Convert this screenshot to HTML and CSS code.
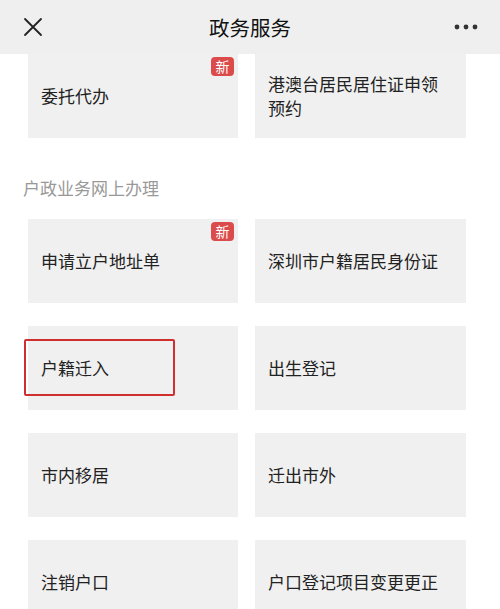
FILE: index.html
```html
<!DOCTYPE html>
<html lang="zh">
<head>
<meta charset="utf-8">
<link rel="stylesheet" href="styles.css">
</head>
<body>
<div class="page">
  <header class="topbar">
    <svg class="close" width="20" height="20" viewBox="0 0 20 20"><path d="M2 2 L18 18 M18 2 L2 18" stroke="#222" stroke-width="1.8" fill="none" stroke-linecap="round"/></svg>
    <div class="title">政务服务</div>
    <svg class="more" width="24" height="6" viewBox="0 0 24 6"><circle cx="3" cy="3" r="2.4" fill="#333"/><circle cx="12" cy="3" r="2.4" fill="#333"/><circle cx="21" cy="3" r="2.4" fill="#333"/></svg>
  </header>
  <div class="grid">
    <div class="card"><span class="txt">委托代办</span><span class="badge">新</span></div>
    <div class="card"><span class="txt">港澳台居民居住证申领<br>预约</span></div>
  </div>
  <div class="section">户政业务网上办理</div>
  <div class="grid">
    <div class="card"><span class="txt">申请立户地址单</span><span class="badge">新</span></div>
    <div class="card"><span class="txt">深圳市户籍居民身份证</span></div>
    <div class="card"><span class="txt">户籍迁入</span><span class="mark"></span></div>
    <div class="card"><span class="txt">出生登记</span></div>
    <div class="card"><span class="txt">市内移居</span></div>
    <div class="card"><span class="txt">迁出市外</span></div>
    <div class="card"><span class="txt">注销户口</span></div>
    <div class="card"><span class="txt">户口登记项目变更更正</span></div>
  </div>
</div>
</body>
</html>
```
FILE: styles.css
```css
html, body {
  margin: 0;
  padding: 0;
  background: #fff;
  overflow: hidden;
}
.page {
  width: 500px;
  height: 609px;
  overflow: hidden;
  font-family: "Noto Sans CJK SC", "Noto Sans", sans-serif;
  color: #222;
}
.topbar {
  height: 54px;
  background: #efefef;
  display: flex;
  align-items: center;
  justify-content: space-between;
  padding: 0 22px 0 23px;
  position: relative;
}
.close { display: block; }
.title {
  position: absolute;
  left: 0;
  right: 0;
  text-align: center;
  font-size: 20.5px;
  line-height: 54px;
  color: #111;
  pointer-events: none;
}
.more { display: block; }
.grid {
  display: grid;
  grid-template-columns: 210px 211px;
  column-gap: 17px;
  row-gap: 23px;
  padding-left: 28px;
}
.card {
  height: 84px;
  background: #f0f0f0;
  display: flex;
  align-items: center;
  padding-left: 13px;
  position: relative;
  box-sizing: border-box;
}
.txt {
  font-size: 17px;
  line-height: 24px;
  color: #222;
}
.badge {
  position: absolute;
  top: 3px;
  right: 4px;
  width: 23px;
  height: 19px;
  background: #dc4b4b;
  color: #fff;
  border-radius: 4px;
  font-size: 14px;
  line-height: 19px;
  text-align: center;
}
.mark {
  position: absolute;
  left: -4px;
  top: 13px;
  width: 151px;
  height: 57px;
  border: 2px solid #cf2f2f;
  border-radius: 2px;
  box-sizing: border-box;
}
.section {
  margin: 38px 0 19px 23px;
  font-size: 17px;
  line-height: 24px;
  color: #999;
}
```
